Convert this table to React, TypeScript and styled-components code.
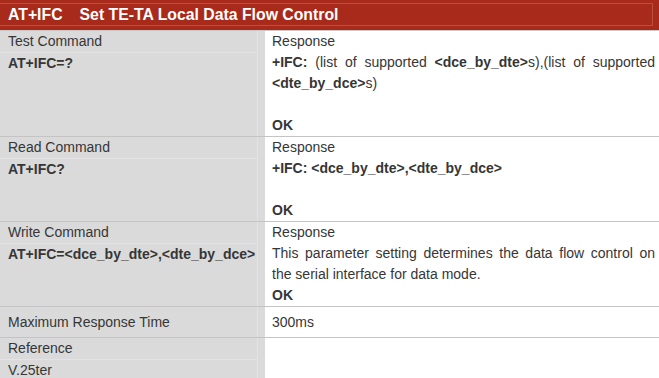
import React from "react";
import styled, { createGlobalStyle } from "styled-components";

const GlobalStyle = createGlobalStyle`
  html, body {
    margin: 0;
    padding: 0;
    background: #ffffff;
  }

  body {
    font-family: "Liberation Sans", Arial, sans-serif;
    color: #363636;
  }
`;

interface Row {
  label: string;
  command?: string;
  plainCommand?: boolean;
  body: React.ReactNode;
  compact?: boolean;
}

const getRows = (): Row[] => [
  {
    label: "Test Command",
    command: "AT+IFC=?",
    body: (
      <>
        <Line>Response</Line>
        <Para>
          <b>+IFC:</b> (list of supported <b>&lt;dce_by_dte&gt;</b>s),(list of supported <b>&lt;dte_by_dce&gt;</b>s)
        </Para>
        <Line />
        <Line>
          <b>OK</b>
        </Line>
      </>
    ),
  },
  {
    label: "Read Command",
    command: "AT+IFC?",
    body: (
      <>
        <Line>Response</Line>
        <Line>
          <b>+IFC: &lt;dce_by_dte&gt;,&lt;dte_by_dce&gt;</b>
        </Line>
        <Line />
        <Line>
          <b>OK</b>
        </Line>
      </>
    ),
  },
  {
    label: "Write Command",
    command: "AT+IFC=<dce_by_dte>,<dte_by_dce>",
    body: (
      <>
        <Line>Response</Line>
        <Para>This parameter setting determines the data flow control on the serial interface for data mode.</Para>
        <Line>
          <b>OK</b>
        </Line>
      </>
    ),
  },
  {
    label: "Maximum Response Time",
    body: <Line>300ms</Line>,
    compact: true,
  },
  {
    label: "Reference",
    command: "V.25ter",
    plainCommand: true,
    body: null,
  },
];

const App = () => {
  const rows = getRows();

  return (
    <>
      <GlobalStyle />
      <Table>
        <Header>
          <HeaderInner>
            <Cmd>AT+IFC</Cmd>
            <span>Set TE-TA Local Data Flow Control</span>
          </HeaderInner>
        </Header>
        {rows.map((row) => (
          <TableRow key={row.label} $compact={row.compact}>
            <LeftCell>
              <Shade $compact={row.compact}>
                <LeftLine>{row.label}</LeftLine>
                {row.command && <LeftLine $bold={!row.plainCommand}>{row.command}</LeftLine>}
              </Shade>
            </LeftCell>
            <RightCell $compact={row.compact}>{row.body}</RightCell>
          </TableRow>
        ))}
      </Table>
    </>
  );
};

export default App;

const Table = styled.div`
  display: flex;
  flex-direction: column;
  width: 659px;
  height: 378px;
  overflow: hidden;

  font-size: 14px;
  line-height: 21px;
`;

const Header = styled.div`
  flex: 0 0 29px;
  padding: 3px 0 4px 0;
  box-sizing: border-box;

  background: #a72a1a;
  border-bottom: 1px solid #c9c9c9;
`;

const HeaderInner = styled.div`
  display: flex;
  align-items: center;
  height: 100%;
  width: 653px;
  padding-left: 8px;
  box-sizing: border-box;

  border-top: 1px solid #b9513f;
  border-bottom: 1px solid #b9513f;
  border-right: 1px solid #b9513f;

  color: #ffffff;
  font-size: 15.8px;
  font-weight: 700;
`;

const Cmd = styled.span`
  margin-right: 17px;
`;

const TableRow = styled.div<{ $compact?: boolean }>`
  display: grid;
  grid-template-columns: 265px 1fr;
  flex: ${({ $compact }) => ($compact ? "0 0 31px" : "0 0 auto")};
  box-sizing: border-box;

  border-bottom: 1px solid #c4c4c4;

  &:last-child {
    flex: 1;
    border-bottom: none;
  }
`;

const LeftCell = styled.div`
  background: #dadada;
`;

const Shade = styled.div<{ $compact?: boolean }>`
  display: flex;
  flex-direction: column;
  justify-content: ${({ $compact }) => ($compact ? "center" : "flex-start")};
  width: 258px;
  height: 100%;
  border-right: 1px solid #e3e3e3;
  box-sizing: border-box;
`;

const LeftLine = styled.div<{ $bold?: boolean }>`
  height: 21px;
  padding-left: 8px;
  white-space: nowrap;
  box-sizing: border-box;
  font-weight: ${({ $bold }) => ($bold ? 700 : 400)};

  & + & {
    border-top: 1px solid #e3e3e3;
  }
`;

const RightCell = styled.div<{ $compact?: boolean }>`
  display: flex;
  flex-direction: column;
  justify-content: ${({ $compact }) => ($compact ? "center" : "flex-start")};
  padding: 0 4px 0 7px;
  background: #ffffff;
`;

const Line = styled.div`
  min-height: 21px;
`;

const Para = styled.div`
  text-align: justify;
`;
